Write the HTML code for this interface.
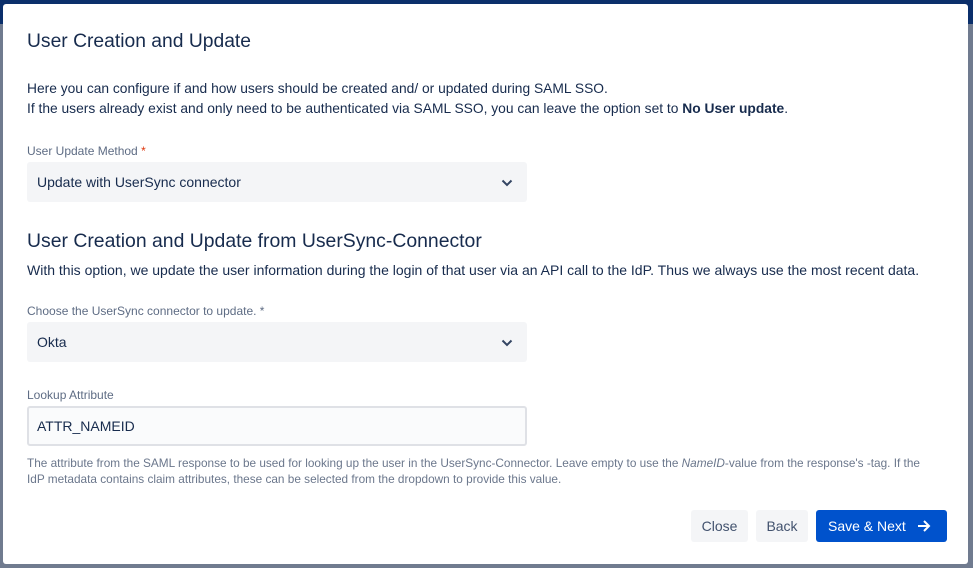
<!DOCTYPE html>
<html><head><meta charset="utf-8"><style>
*{box-sizing:border-box;margin:0;padding:0}
body{width:973px;height:568px;overflow:hidden;background:#707b8f;font-family:"Liberation Sans",sans-serif;color:#172b4d;position:relative}
.top{position:absolute;left:0;top:0;width:973px;height:24px;background:#0b2f6b}
.modal{position:absolute;left:3px;top:4px;width:965px;height:560px;background:#fff;border-radius:3px}
.abs{position:absolute;white-space:nowrap}
.p{font-size:13.8px;left:24px}
.lbl{font-size:12px;color:#5e6c84;left:24px}
.sel{left:24px;width:500px;height:40px;background:#f4f5f7;border-radius:3px;font-size:14px;padding:0 10px;line-height:40px}
.sel svg{position:absolute;right:14px;top:17px}
.inp{left:24px;top:402px;width:500px;height:40px;background:#fafbfc;border:2px solid #dfe1e6;border-radius:3px;font-size:14px;padding:0 8px;line-height:36px}
.help{font-size:11.8px;color:#6b778c;left:24px;top:451px;line-height:16px}
.btn{top:506px;height:32px;border-radius:3px;font-size:14px;line-height:32px;text-align:center;background:#f4f5f7;color:#42526e}
</style></head><body>
<div class="top"></div>
<div class="modal">
<div class="abs" style="font-size:19.3px;left:24px;top:27px">User Creation and Update</div>
<div class="abs p" style="top:77px">Here you can configure if and how users should be created and/ or updated during SAML SSO.</div>
<div class="abs p" style="top:97px">If the users already exist and only need to be authenticated via SAML SSO, you can leave the option set to <b>No User update</b>.</div>
<div class="abs lbl" style="top:140px">User Update Method <span style="color:#de350b">*</span></div>
<div class="abs sel" style="top:158px">Update with UserSync connector<svg width="12" height="8" viewBox="0 0 12 8"><path d="M1.5 1.5L6 6l4.5-4.5" stroke="#344563" stroke-width="2" fill="none"/></svg></div>
<div class="abs" style="font-size:19.4px;left:24px;top:226px">User Creation and Update from UserSync-Connector</div>
<div class="abs" style="font-size:14px;left:24px;top:258px">With this option, we update the user information during the login of that user via an API call to the IdP. Thus we always use the most recent data.</div>
<div class="abs lbl" style="top:300px">Choose the UserSync connector to update. *</div>
<div class="abs sel" style="top:318px">Okta<svg width="12" height="8" viewBox="0 0 12 8"><path d="M1.5 1.5L6 6l4.5-4.5" stroke="#344563" stroke-width="2" fill="none"/></svg></div>
<div class="abs lbl" style="top:384px">Lookup Attribute</div>
<div class="abs inp">ATTR_NAMEID</div>
<div class="abs help">The attribute from the SAML response to be used for looking up the user in the UserSync-Connector. Leave empty to use the <i>NameID</i>-value from the response's -tag. If the<br>IdP metadata contains claim attributes, these can be selected from the dropdown to provide this value.</div>
<div class="abs btn" style="left:688px;width:57px">Close</div>
<div class="abs btn" style="left:753px;width:52px">Back</div>
<div class="abs btn" style="left:813px;width:131px;background:#0052cc;color:#fff;text-align:left;padding-left:12px">Save &amp; Next<svg style="position:absolute;right:16px;top:9px" width="14" height="14" viewBox="0 0 14 14"><path d="M1 7h11M7 2l5 5-5 5" stroke="#fff" stroke-width="2" fill="none"/></svg></div>
</div>
</body></html>
